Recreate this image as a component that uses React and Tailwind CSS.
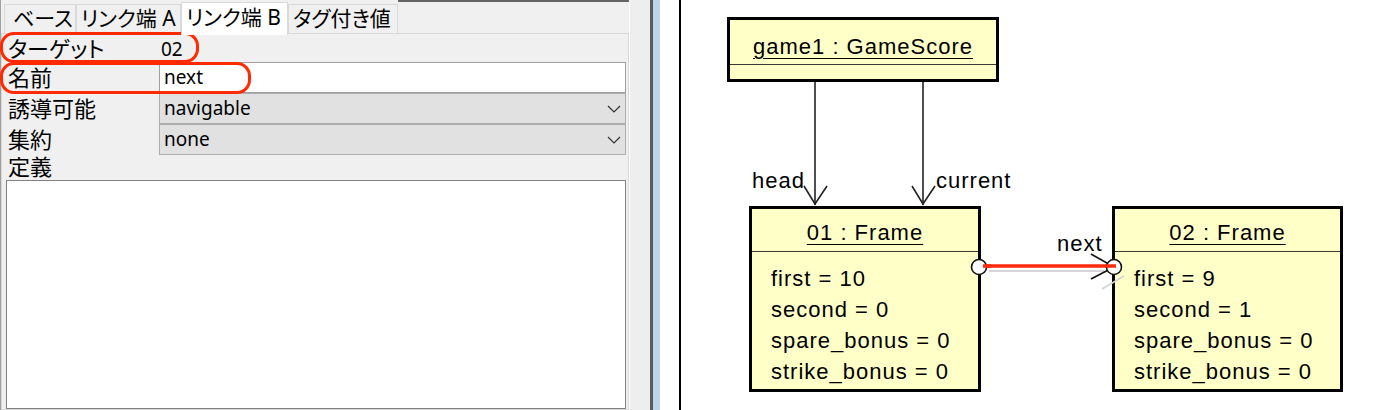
import React from 'react';

const jp = "font-['Noto_Sans','Noto_Sans_CJK_JP',sans-serif] [font-feature-settings:'palt']";
const uml = "font-['Liberation_Sans',Arial,sans-serif] text-[22px] tracking-[1px] text-black";

function Tab({ label, width, active, pad = 'pl-[4px]' }) {
    if (active) {
        return (
            <div
                className={`relative z-10 -mb-[2px] flex h-[33px] shrink-0 items-center whitespace-nowrap border border-b-0 border-[#d9d9d9] bg-white pb-[4px] text-[21px] leading-none ${pad}`}
                style={{ width }}
            >
                {label}
            </div>
        );
    }
    return (
        <div
            className={`flex h-[29px] shrink-0 items-center whitespace-nowrap border border-b-0 border-[#d9d9d9] bg-[#f0f0f0] pb-[2px] text-[21px] leading-none ${pad}`}
            style={{ width }}
        >
            {label}
        </div>
    );
}

function Chevron() {
    return (
        <svg width="14" height="8" viewBox="0 0 14 8" className="mr-[4px]">
            <polyline points="1,1 7,7 13,1" fill="none" stroke="#333" strokeWidth="1.2" />
        </svg>
    );
}

function PropRow({ label, children, h }) {
    return (
        <div className={`grid grid-cols-[153px_1fr] items-center ${h}`}>
            <div className="pl-[2px] pb-[2px] text-[22px] leading-[22px]">{label}</div>
            {children}
        </div>
    );
}

function SelectBox({ value }) {
    return (
        <div className="flex h-full items-center justify-between border border-[#adadad] bg-[#e1e1e1] pl-[4px] text-[19px] leading-none">
            <span>{value}</span>
            <Chevron />
        </div>
    );
}

function ObjectBox({ title, attrs, className, headClass }) {
    return (
        <div className={`absolute flex flex-col border-[3px] border-black bg-[#ffffc8] ${className}`}>
            <div className={`flex items-center justify-center border-b border-[#3a3a3a] ${headClass}`}>
                <span className="underline underline-offset-[4px] decoration-1">{title}</span>
            </div>
            {attrs.length > 0 && (
                <div className="flex flex-col pl-[19px] pt-[11px]">
                    {attrs.map((a) => (
                        <div key={a} className="h-[31px] leading-[31px]">{a}</div>
                    ))}
                </div>
            )}
        </div>
    );
}

export default function App() {
    return (
        <div className="flex h-[410px] w-[1387px] overflow-hidden bg-white text-black">
            {/* property panel */}
            <div className={`relative flex w-[629px] flex-col border-l border-[#a0a0a0] bg-[#f0f0f0] ${jp}`}>
                <div className="flex h-[33px] items-end pl-[3px]">
                    <Tab label="ベース" width={72} pad="pl-[8px]" />
                    <Tab label="リンク端 A" width={105} />
                    <Tab label="リンク端 B" width={107} active />
                    <Tab label="タグ付き値" width={110} />
                    <div className="h-full flex-1 border-t-2 border-[#646464]" />
                </div>
                <div className="flex flex-1 flex-col border border-[#d9d9d9] bg-[#f0f0f0] pl-[4px] pr-[2px] pt-[2px]">
                    <PropRow label="ターゲット" h="h-[26px]">
                        <div className="pl-[2px] text-[19px] leading-none">02</div>
                    </PropRow>
                    <PropRow label="名前" h="h-[31px]">
                        <div className="flex h-full items-center border border-[#a0a0a0] bg-white pl-[4px] text-[19px] leading-none">
                            next
                        </div>
                    </PropRow>
                    <PropRow label="誘導可能" h="h-[31px]">
                        <SelectBox value="navigable" />
                    </PropRow>
                    <PropRow label="集約" h="h-[31px]">
                        <SelectBox value="none" />
                    </PropRow>
                    <div className="h-[25px] pl-[2px] text-[22px] leading-[22px]">定義</div>
                    <div className="flex-1 border border-[#828282] bg-white" />
                </div>

                {/* annotation outlines */}
                <div className="pointer-events-none absolute left-[-1px] top-[32px] h-[31px] w-[199px] rounded-[14px] border-[3px] border-[#ff2a00]" />
                <div className="pointer-events-none absolute left-[-1px] top-[62px] h-[32px] w-[251px] rounded-[14px] border-[3px] border-[#ff2a00]" />
            </div>

            {/* splitter */}
            <div className="w-[21px] border-l border-white bg-[#eeeeee]" />
            <div className="w-[3px] bg-[#5a5a5a]" />
            <div className="w-[7px] bg-[#bcd4ec]" />
            <div className="w-[19px] bg-white" />
            <div className="w-[2px] bg-black" />

            {/* diagram canvas */}
            <div className={`relative flex-1 bg-white ${uml}`}>
                <ObjectBox
                    title="game1 : GameScore"
                    attrs={[]}
                    className="left-[46px] top-[17px] h-[65px] w-[272px]"
                    headClass="h-[45px] pt-[8px]"
                />
                <ObjectBox
                    title="01 : Frame"
                    attrs={['first = 10', 'second = 0', 'spare_bonus = 0', 'strike_bonus = 0']}
                    className="left-[68px] top-[206px] h-[186px] w-[232px]"
                    headClass="h-[43px] pt-[5px]"
                />
                <ObjectBox
                    title="02 : Frame"
                    attrs={['first = 9', 'second = 1', 'spare_bonus = 0', 'strike_bonus = 0']}
                    className="left-[431px] top-[206px] h-[186px] w-[231px]"
                    headClass="h-[43px] pt-[5px]"
                />

                <div className="absolute left-[71px] top-[170px] leading-none">head</div>
                <div className="absolute left-[255px] top-[170px] leading-none">current</div>
                <div className="absolute left-[376px] top-[233px] leading-none">next</div>

                <svg className="pointer-events-none absolute inset-0" width="707" height="410">
                    <g stroke="#222" strokeWidth="1.6" fill="none">
                        <line x1="134" y1="82" x2="134" y2="205" />
                        <polyline points="123,186 134,204 146,186" />
                        <line x1="242" y1="82" x2="242" y2="205" />
                        <polyline points="231,186 242,204 254,186" />
                    </g>
                    <line x1="308" y1="271" x2="423" y2="271" stroke="#d6d6d6" strokeWidth="2" />
                    <line x1="421" y1="289" x2="443" y2="276" stroke="#d2d2d2" strokeWidth="1.5" />
                    <line x1="302" y1="266" x2="435" y2="266" stroke="#ff2a0a" strokeWidth="3.5" />
                    <g stroke="#111" strokeWidth="1.6" fill="none">
                        <line x1="410" y1="254" x2="433" y2="267" />
                        <line x1="410" y1="279" x2="433" y2="267" />
                    </g>
                    <circle cx="298" cy="267" r="7.5" fill="white" stroke="#111" strokeWidth="1.6" />
                    <circle cx="433" cy="267" r="7.5" fill="white" stroke="#111" strokeWidth="1.6" />
                    <line x1="302" y1="266" x2="310" y2="266" stroke="#ff2a0a" strokeWidth="3.5" />
                    <line x1="425" y1="266" x2="435" y2="266" stroke="#ff2a0a" strokeWidth="3.5" />
                </svg>
            </div>
        </div>
    );
}
